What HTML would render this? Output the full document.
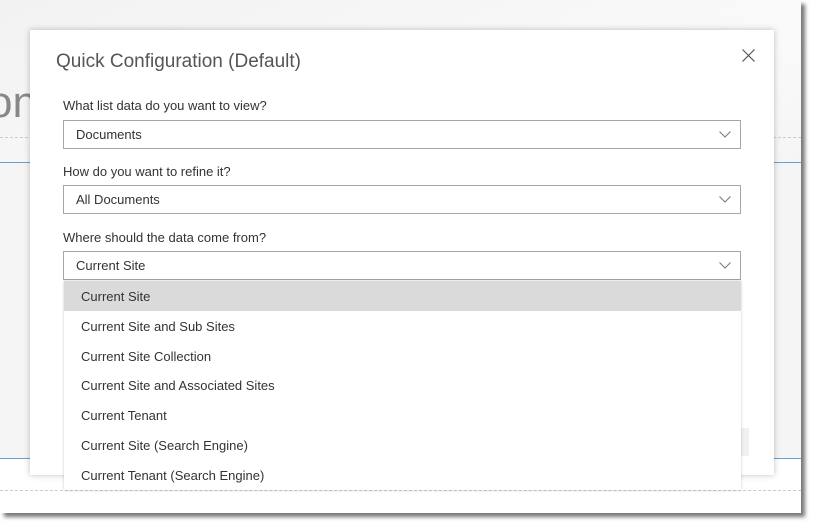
<!DOCTYPE html>
<html><head><style>
*{margin:0;padding:0;box-sizing:border-box}
body{width:815px;height:526px;background:#fff;position:relative;overflow:hidden;font-family:"Segoe UI","Liberation Sans",sans-serif;color:#333}
.page{position:absolute;left:0;top:0;width:801px;height:513px;background:linear-gradient(160deg,#f2f2f2 0%,#fafafa 40%,#f4f4f4 60%,#fff 70%);box-shadow:4px 4px 4px #777}
.band{position:absolute;left:0;top:162px;width:801px;height:297px;background:#f5f5f5;border-top:1px solid #6aa0cf;border-bottom:1px solid #6aa0cf}
.low{position:absolute;left:0;top:459px;width:801px;height:54px;background:#fff}
.dash{position:absolute;left:0;width:801px;border-top:1px dashed #ccc}
.big{position:absolute;left:-12px;top:78px;font-size:44px;color:#888}
.modal{position:absolute;left:30px;top:30px;width:744px;height:445px;background:#fff;box-shadow:0 0 6px rgba(0,0,0,.25)}
.title{position:absolute;left:26px;top:21px;font-size:19px;color:#555}
.x{position:absolute;left:712px;top:19px}
.lbl{position:absolute;left:33px;font-size:13px;color:#333}
.sel{position:absolute;left:33px;width:678px;height:29px;border:1px solid #a6a6a6;font-size:13px;padding:6px 12px;color:#333}
.sel svg{position:absolute;right:9px;top:10px}
.list{position:absolute;left:64px;top:281px;width:677px;height:209px;background:#fff;box-shadow:0 0 3px rgba(0,0,0,.2)}
.it{height:29.8px;line-height:31px;padding-left:17px;font-size:13px;color:#333}
.it.on{background:#dadada}
</style></head><body>
<div class="page">
<div class="dash" style="top:137px"></div>
<div class="band"></div>
<div class="low"></div>
<div class="dash" style="top:490px"></div>
<div class="big">on</div>
</div>
<div class="modal">
<div class="title">Quick Configuration (Default)</div>
<svg class="x" width="13" height="13"><path d="M0.5 0.5L12.5 12.5M12.5 0.5L0.5 12.5" stroke="#555" stroke-width="1.2"/></svg>
<div class="lbl" style="top:68px">What list data do you want to view?</div>
<div class="sel" style="top:90px">Documents<svg width="12" height="7"><path d="M0.5 0.5L6 6 11.5 0.5" fill="none" stroke="#777"/></svg></div>
<div class="lbl" style="top:134px">How do you want to refine it?</div>
<div class="sel" style="top:155px">All Documents<svg width="12" height="7"><path d="M0.5 0.5L6 6 11.5 0.5" fill="none" stroke="#777"/></svg></div>
<div class="lbl" style="top:200px">Where should the data come from?</div>
<div class="sel" style="top:221px">Current Site<svg width="12" height="7"><path d="M0.5 0.5L6 6 11.5 0.5" fill="none" stroke="#777"/></svg></div>
<div style="position:absolute;left:711px;top:398px;width:8px;height:28px;background:#f0f0f0"></div>
</div>
<div class="list">
<div class="it on">Current Site</div>
<div class="it">Current Site and Sub Sites</div>
<div class="it">Current Site Collection</div>
<div class="it">Current Site and Associated Sites</div>
<div class="it">Current Tenant</div>
<div class="it">Current Site (Search Engine)</div>
<div class="it">Current Tenant (Search Engine)</div>
</div>
</body></html>
